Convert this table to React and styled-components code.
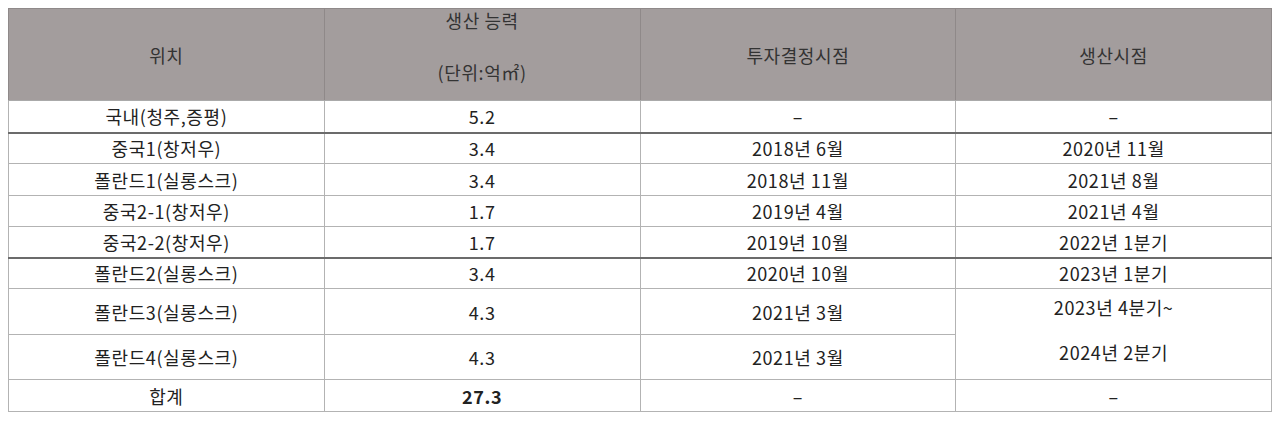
import React from 'react';
import styled, { createGlobalStyle } from 'styled-components';

const GlobalStyle = createGlobalStyle`
    body {
        margin: 8px;
        background: #ffffff;
        font-family: "Noto Sans CJK KR", "Noto Sans", sans-serif;
    }
`;

const Table = styled.table`
    width: 1264px;
    border-collapse: collapse;
    table-layout: fixed;
    font-size: 18px;
    letter-spacing: 0.6px;
    color: #222222;
`;

const HeadCell = styled.th`
    height: 91px;
    padding: 0;
    background: #a39d9d;
    color: #333333;
    font-weight: 400;
    text-align: center;
    vertical-align: ${props => props.top ? 'top' : 'middle'};
    border: 1px solid #8f8989;
    border-bottom-color: #aaaaaa;
`;

const HeadLine = styled.div`
    line-height: 22px;
    margin-top: ${props => props.gap || 0}px;
`;

const Row = styled.tr`
    height: ${props => props.h}px;
    & > td {
        border-bottom: ${props => props.strong ? '2px solid #6b6b6b' : '1px solid #b3b3b3'};
    }
`;

const Cell = styled.td`
    padding: 0;
    text-align: center;
    vertical-align: ${props => props.top ? 'top' : 'middle'};
    line-height: 22px;
    font-weight: ${props => props.bold ? 700 : 400};
    border-left: 1px solid #b3b3b3;
    border-right: 1px solid #b3b3b3;
`;

const MergedLine = styled.div`
    line-height: 24px;
    margin-top: ${props => props.gap}px;
`;

const rows = [
    { place: '국내(청주,증평)', cap: '5.2', invest: '–', prod: '–', h: 32, strong: true },
    { place: '중국1(창저우)', cap: '3.4', invest: '2018년 6월', prod: '2020년 11월', h: 31 },
    { place: '폴란드1(실롱스크)', cap: '3.4', invest: '2018년 11월', prod: '2021년 8월', h: 32 },
    { place: '중국2-1(창저우)', cap: '1.7', invest: '2019년 4월', prod: '2021년 4월', h: 31 },
    { place: '중국2-2(창저우)', cap: '1.7', invest: '2019년 10월', prod: '2022년 1분기', h: 31, strong: true },
    { place: '폴란드2(실롱스크)', cap: '3.4', invest: '2020년 10월', prod: '2023년 1분기', h: 31 },
];

export default function App() {
    return (
        <>
            <GlobalStyle />
            <Table>
                <thead>
                    <tr>
                        <HeadCell>위치</HeadCell>
                        <HeadCell top>
                            <HeadLine gap={0}>생산 능력</HeadLine>
                            <HeadLine gap={30}>(단위:억㎡)</HeadLine>
                        </HeadCell>
                        <HeadCell>투자결정시점</HeadCell>
                        <HeadCell>생산시점</HeadCell>
                    </tr>
                </thead>
                <tbody>
                    {rows.map(r => (
                        <Row key={r.place} h={r.h} strong={r.strong}>
                            <Cell>{r.place}</Cell>
                            <Cell>{r.cap}</Cell>
                            <Cell>{r.invest}</Cell>
                            <Cell>{r.prod}</Cell>
                        </Row>
                    ))}
                    <Row h={46}>
                        <Cell>폴란드3(실롱스크)</Cell>
                        <Cell>4.3</Cell>
                        <Cell>2021년 3월</Cell>
                        <Cell rowSpan={2} top>
                            <MergedLine gap={6}>2023년 4분기~</MergedLine>
                            <MergedLine gap={21}>2024년 2분기</MergedLine>
                        </Cell>
                    </Row>
                    <Row h={45}>
                        <Cell>폴란드4(실롱스크)</Cell>
                        <Cell>4.3</Cell>
                        <Cell>2021년 3월</Cell>
                    </Row>
                    <Row h={32}>
                        <Cell>합계</Cell>
                        <Cell bold>27.3</Cell>
                        <Cell>–</Cell>
                        <Cell>–</Cell>
                    </Row>
                </tbody>
            </Table>
        </>
    );
}
